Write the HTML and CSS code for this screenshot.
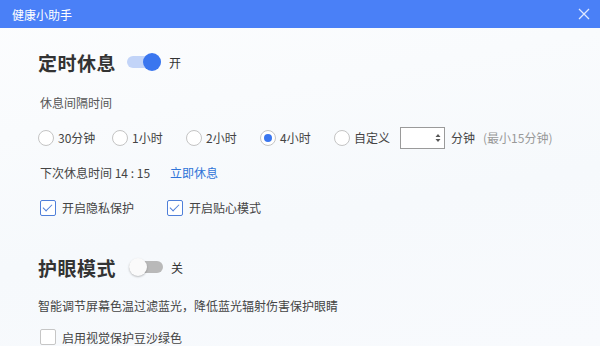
FILE: index.html
```html
<!DOCTYPE html>
<html lang="zh-CN">
<head>
    <meta charset="UTF-8">
    <title>健康小助手</title>
    <link rel="stylesheet" href="styles.css">
</head>
<body>
    <div class="titlebar">
        <span class="title">健康小助手</span>
        <svg class="close" width="12" height="12" viewBox="0 0 12 12">
            <path d="M1 1 L11 11 M11 1 L1 11" stroke="#dfe8ff" stroke-width="1.3" fill="none"/>
        </svg>
    </div>

    <div class="content">
        <div class="head">
            <h2>定时休息</h2>
            <span class="switch on"><span class="knob"></span></span>
            <span class="state">开</span>
        </div>

        <div class="label">休息间隔时间</div>

        <div class="row radios">
            <label class="radio"><span class="dot"></span>30分钟</label>
            <label class="radio"><span class="dot"></span>1小时</label>
            <label class="radio"><span class="dot"></span>2小时</label>
            <label class="radio"><span class="dot checked"></span>4小时</label>
            <label class="radio custom"><span class="dot"></span>自定义</label>
            <span class="spin">
                <svg width="6" height="10" viewBox="0 0 6 10">
                    <path d="M3 1 L5.5 4 L0.5 4 Z M3 9 L5.5 6 L0.5 6 Z" fill="#555"/>
                </svg>
            </span>
            <span class="unit">分钟</span>
            <span class="hint">(最小15分钟)</span>
        </div>

        <div class="row">
            <span>下次休息时间 14 : 15</span>
            <a class="link" href="#">立即休息</a>
        </div>

        <div class="row">
            <label class="check first"><span class="box checked"></span>开启隐私保护</label>
            <label class="check"><span class="box checked"></span>开启贴心模式</label>
        </div>

        <div class="head second">
            <h2>护眼模式</h2>
            <span class="switch off"><span class="knob"></span></span>
            <span class="state">关</span>
        </div>

        <div class="desc">智能调节屏幕色温过滤蓝光，降低蓝光辐射伤害保护眼睛</div>

        <div class="last">
            <label class="check"><span class="box"></span>启用视觉保护豆沙绿色</label>
        </div>
    </div>
</body>
</html>
```

FILE: styles.css
```css
body {
    margin: 0;
    width: 600px;
    height: 346px;
    overflow: hidden;
    font-family: "Noto Sans CJK SC", "Microsoft YaHei", sans-serif;
    font-size: 12px;
    color: #444;
    background: linear-gradient(170deg, #fcfdfe 0%, #f6f9fc 60%, #f8fafd 100%);
}
.titlebar {
    height: 28px;
    background-color: #4a80f7;
    display: flex;
    align-items: center;
    justify-content: space-between;
    padding: 0 10px 0 12px;
}
.title {
    color: #fff;
    font-size: 12px;
}
.content {
    padding-left: 38px;
}
.head {
    height: 36px;
    margin-top: 16px;
    display: flex;
    align-items: center;
}
.head.second {
    margin-top: 24px;
}
.head h2 {
    margin: 0;
    font-size: 19px;
    font-weight: bold;
    color: #333;
    letter-spacing: 0.5px;
}
.switch {
    position: relative;
    width: 34px;
    height: 12px;
    border-radius: 6px;
    margin-left: 11px;
}
.switch.on {
    background-color: #c2d4f8;
}
.switch.off {
    background-color: #b9b9b9;
    margin-left: 13px;
}
.knob {
    position: absolute;
    top: -3px;
    width: 18px;
    height: 18px;
    border-radius: 50%;
}
.switch.on .knob {
    right: 0;
    background-color: #3a76ef;
}
.switch.off .knob {
    left: 0;
    background-color: #fafafa;
    box-shadow: 0 1px 2px rgba(0, 0, 0, 0.25);
}
.state {
    margin-left: 8px;
    font-size: 12px;
    color: #333;
}
.label {
    margin-top: 13px;
    height: 20px;
    line-height: 20px;
    padding-left: 2px;
    color: #555;
}
.row {
    height: 35px;
    display: flex;
    align-items: center;
    padding-left: 2px;
    color: #444;
}
.radios {
    margin-top: 7px;
    padding-left: 0;
}
.radio {
    display: flex;
    align-items: center;
    width: 74px;
}
.radio.custom {
    width: 66px;
}
.dot {
    width: 14px;
    height: 14px;
    border: 1px solid #c4c4c4;
    border-radius: 50%;
    background-color: #fff;
    margin-right: 4px;
    position: relative;
}
.dot.checked::after {
    content: "";
    position: absolute;
    left: 3px;
    top: 3px;
    width: 8px;
    height: 8px;
    border-radius: 50%;
    background-color: #3a76ef;
}
.spin {
    display: flex;
    align-items: center;
    justify-content: flex-end;
    box-sizing: border-box;
    width: 45px;
    height: 22px;
    padding-right: 3px;
    border: 1px solid #9a9a9a;
    background-color: #fff;
}
.unit {
    margin-left: 6px;
}
.hint {
    margin-left: 8px;
    color: #999;
}
.link {
    margin-left: 20px;
    color: #2f74d8;
    text-decoration: none;
}
.check {
    display: flex;
    align-items: center;
}
.check.first {
    width: 127px;
}
.box {
    width: 14px;
    height: 14px;
    border: 1px solid #c6c6c6;
    border-radius: 2px;
    background-color: #fff;
    margin-right: 6px;
    position: relative;
}
.box.checked {
    border-color: #4f7fd9;
}
.box.checked::after {
    content: "";
    position: absolute;
    left: 4px;
    top: 1px;
    width: 4px;
    height: 8px;
    border: solid #4f7fd9;
    border-width: 0 1px 1px 0;
    transform: rotate(45deg);
}
.desc {
    margin-top: 11px;
    height: 20px;
    line-height: 20px;
    color: #444;
}
.last {
    margin-top: 11px;
    height: 20px;
    display: flex;
    align-items: center;
    padding-left: 2px;
}
```
